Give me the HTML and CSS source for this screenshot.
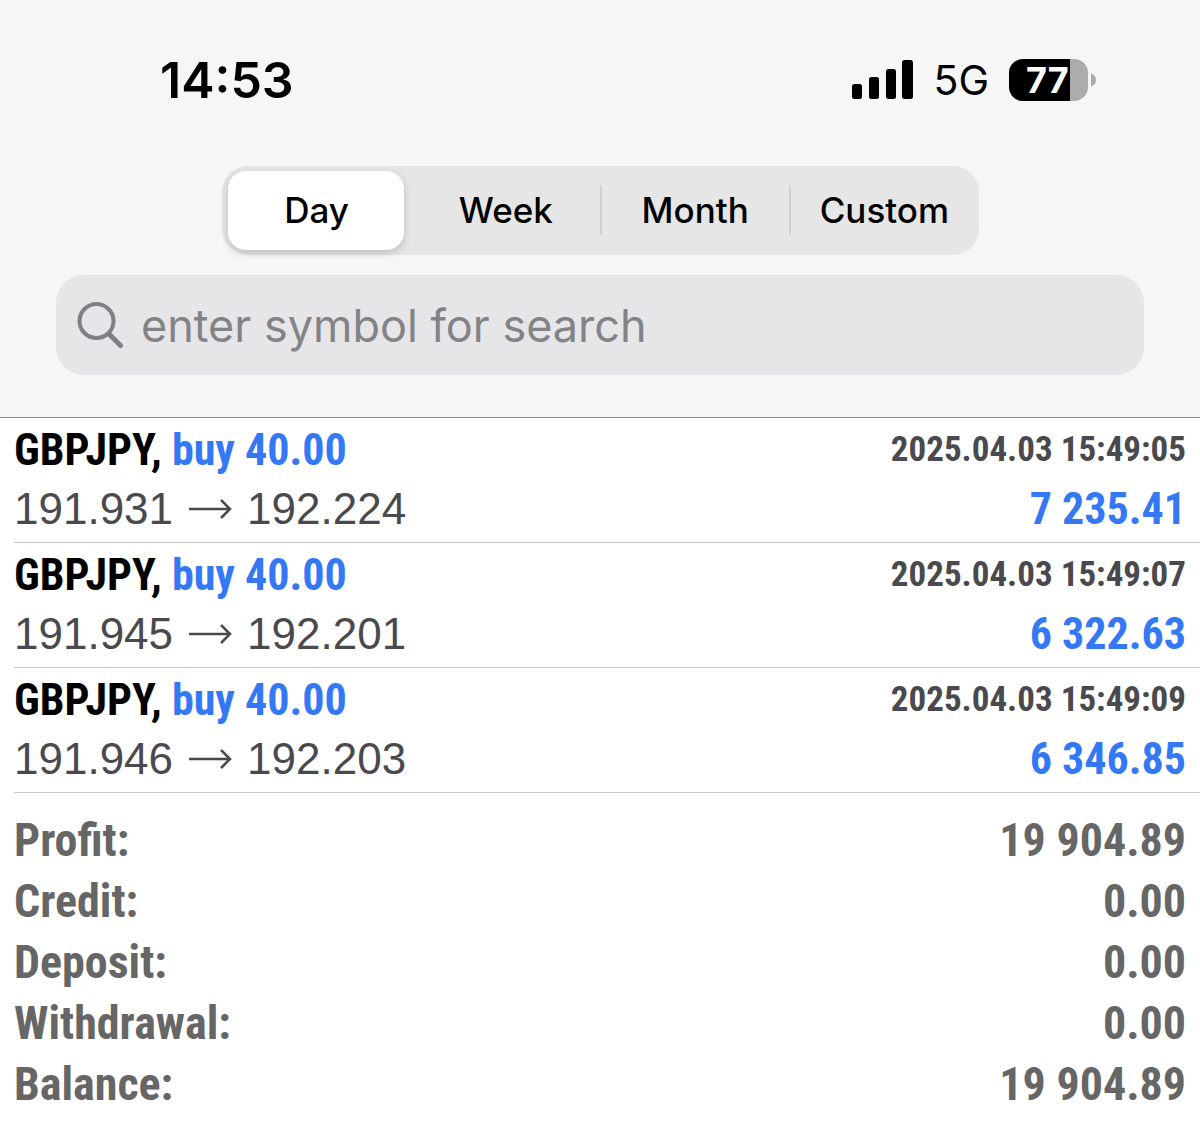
FILE: index.html
```
<!DOCTYPE html>
<html lang="en">
<head>
  <meta charset="UTF-8">
  <meta name="viewport" content="width=device-width, initial-scale=1.0">
  <title>History</title>
  <link rel="stylesheet" href="styles.css">
</head>
<body>
  <header class="header">
    <div class="status-bar">
      <time class="clock">14:53</time>
      <div class="status-icons">
        <svg class="signal" width="61" height="40" viewBox="0 0 61 40" aria-hidden="true">
          <rect x="0" y="24" width="10" height="15" rx="2.5"/>
          <rect x="17" y="17" width="10" height="22" rx="2.5"/>
          <rect x="34" y="9" width="10" height="30" rx="2.5"/>
          <rect x="50" y="0" width="11" height="39" rx="2.5"/>
        </svg>
        <span class="network">5G</span>
        <div class="battery">
          <span class="battery-level">77</span>
          <svg width="5" height="14" viewBox="0 0 5 14" aria-hidden="true">
            <path d="M0 0.5C3 1.5 5 4 5 7s-2 5.500-5 6.500z" fill="#acacac"/>
          </svg>
        </div>
      </div>
    </div>

    <nav class="segments">
      <button class="segment active" type="button">Day</button>
      <button class="segment" type="button">Week</button>
      <button class="segment divided" type="button">Month</button>
      <button class="segment divided" type="button">Custom</button>
    </nav>

    <label class="search">
      <svg width="48" height="48" viewBox="0 0 48 48" fill="none" stroke="#808084" aria-hidden="true">
        <circle cx="20.500" cy="20" r="17" stroke-width="4"/>
        <path d="M33 33L44.500 44.500" stroke-width="5" stroke-linecap="round"/>
      </svg>
      <input class="search-input" type="text" placeholder="enter symbol for search" aria-label="enter symbol for search">
    </label>
  </header>

  <main>
    <ul class="deals">
      <li class="deal">
        <div class="line">
          <span class="symbol">GBPJPY, <span class="side">buy 40.00</span></span>
          <time class="date">2025.04.03 15:49:05</time>
        </div>
        <div class="line">
          <span class="prices">191.931
            <svg class="arrow" width="44" height="20" viewBox="0 0 44 20"><path d="M1 10H42M33 1L42 10L33 19"/></svg>
            192.224</span>
          <span class="profit">7 235.41</span>
        </div>
      </li>
      <li class="deal">
        <div class="line">
          <span class="symbol">GBPJPY, <span class="side">buy 40.00</span></span>
          <time class="date">2025.04.03 15:49:07</time>
        </div>
        <div class="line">
          <span class="prices">191.945
            <svg class="arrow" width="44" height="20" viewBox="0 0 44 20"><path d="M1 10H42M33 1L42 10L33 19"/></svg>
            192.201</span>
          <span class="profit">6 322.63</span>
        </div>
      </li>
      <li class="deal">
        <div class="line">
          <span class="symbol">GBPJPY, <span class="side">buy 40.00</span></span>
          <time class="date">2025.04.03 15:49:09</time>
        </div>
        <div class="line">
          <span class="prices">191.946
            <svg class="arrow" width="44" height="20" viewBox="0 0 44 20"><path d="M1 10H42M33 1L42 10L33 19"/></svg>
            192.203</span>
          <span class="profit">6 346.85</span>
        </div>
      </li>
    </ul>

    <dl class="summary">
      <div class="total"><dt>Profit:</dt><dd>19 904.89</dd></div>
      <div class="total"><dt>Credit:</dt><dd>0.00</dd></div>
      <div class="total"><dt>Deposit:</dt><dd>0.00</dd></div>
      <div class="total"><dt>Withdrawal:</dt><dd>0.00</dd></div>
      <div class="total"><dt>Balance:</dt><dd>19 904.89</dd></div>
    </dl>
  </main>
</body>
</html>
```
FILE: styles.css
```
* {
  box-sizing: border-box;
}

body {
  margin: 0;
  background: #fff;
  color: #000;
  font-family: Inter, "Liberation Sans", sans-serif;
}

.header {
  background: #f6f6f6;
  border-bottom: 1px solid #8c8c8e;
  padding: 50px 56px 42px;
}

/* status bar */
.status-bar {
  display: flex;
  justify-content: space-between;
  align-items: center;
  height: 60px;
  padding: 0 48px 0 104px;
}

.clock {
  font-size: 50px;
  font-weight: 600;
}

.status-icons {
  display: flex;
  align-items: center;
  gap: 20px;
}

.network {
  font-size: 41px;
}

.battery {
  display: flex;
  align-items: center;
  gap: 3px;
}

.battery-level {
  width: 79px;
  height: 42px;
  padding-left: 17px;
  border-radius: 14px;
  background: linear-gradient(to right, #000 61px, #acacac 61px);
  color: #fff;
  font-size: 36px;
  font-weight: 700;
  line-height: 42px;
}

/* period switch */
.segments {
  display: flex;
  max-width: 757px;
  margin: 56px auto 20px;
  border-radius: 26px;
  background: #e6e6e7;
}

.segment {
  position: relative;
  flex: 1;
  height: 79px;
  margin: 5px 7px 5px 6px;
  padding: 0 0 2px 2px;
  border: none;
  border-radius: 18px;
  background: none;
  color: #000;
  font-family: inherit;
  font-size: 35px;
  font-weight: 500;
}

.segment.active {
  background: #fff;
  box-shadow: 0 3px 8px rgba(0, 0, 0, 0.18);
}

.segment.divided::before {
  content: "";
  position: absolute;
  left: -6px;
  top: 14px;
  width: 2px;
  height: 50px;
  background: #d0d0d4;
}

/* search box */
.search {
  display: flex;
  align-items: center;
  gap: 17px;
  height: 100px;
  padding: 0 20px;
  border-radius: 28px;
  background: #e6e6e9;
}

.search-input {
  flex: 1;
  min-width: 0;
  padding: 0;
  border: none;
  outline: none;
  background: none;
  font-family: inherit;
  font-size: 45px;
}

.search-input::placeholder {
  color: #838387;
  opacity: 1;
}

/* deals list */
.deals {
  margin: 0;
  padding: 0 0 0 14px;
  list-style: none;
}

.deal {
  height: 125px;
  padding: 2px 14px 0 0;
  border-bottom: 1px solid #c8c8ca;
}

.line {
  display: flex;
  justify-content: space-between;
  align-items: center;
  height: 59px;
}

.symbol,
.date,
.profit,
.summary {
  font-family: "Roboto Condensed", "Liberation Sans", sans-serif;
  font-weight: 700;
}

.symbol,
.profit {
  font-size: 44px;
}

.side,
.profit {
  color: #3478f6;
}

.date {
  color: #4a4a4e;
  font-size: 35px;
}

.prices {
  display: flex;
  align-items: center;
  gap: 15px;
  color: #4a4a4e;
  font-family: "Liberation Sans", sans-serif;
  font-size: 44px;
}

.arrow {
  fill: none;
  stroke: #4a4a4e;
  stroke-width: 2.5;
}

/* totals */
.summary {
  margin: 0;
  padding: 17px 14px 0;
  color: #666;
  font-size: 46px;
}

.total {
  display: flex;
  justify-content: space-between;
  line-height: 61px;
}

.total dd {
  margin: 0;
}
```
